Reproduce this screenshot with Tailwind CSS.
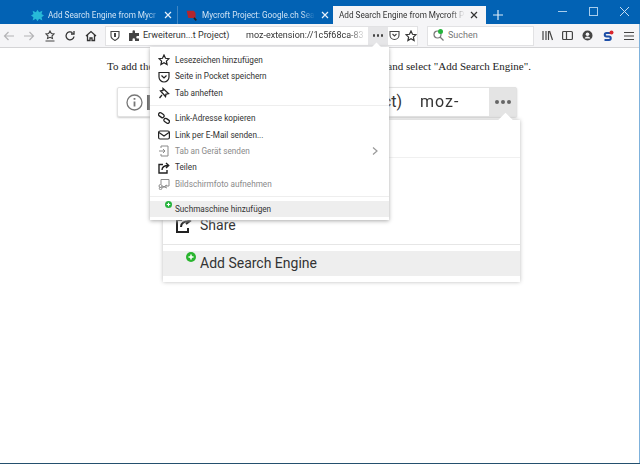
<!DOCTYPE html>
<html lang="en">
<head>
  <meta charset="UTF-8">
  <title>Add Search Engine from Mycroft Project</title>
  <script src="https://cdn.jsdelivr.net/npm/@tailwindcss/browser@4"></script>
</head>
<body class="w-[640px] h-[464px] overflow-hidden bg-white relative font-['Roboto',sans-serif]">

  <!-- tab strip -->
  <div class="h-[24px] bg-[#0262b4] flex items-end text-[8.200px] relative">
    <div class="w-[26px]"></div>
    <div class="w-[152px] h-[18px] flex items-center pl-[5px] text-[#cfe3f5] border-r border-[#3f86c4]">
      <svg class="w-[13px] h-[13px] shrink-0" viewBox="0 0 16 16" fill="#27b9d8"><path d="M8 1l2 3 4-2-1 4 3 2-3 2 1 4-4-2-2 3-2-3-4 2 1-4-3-2 3-2-1-4 4 2z"/></svg>
      <span class="ml-[4px] w-[113px] overflow-hidden whitespace-nowrap [mask-image:linear-gradient(to_right,black_88%,transparent)]">Add Search Engine from Mycr</span>
      <svg class="w-[8px] h-[8px] ml-[3px] shrink-0" viewBox="0 0 8 8" stroke="#e6f0fa" stroke-width="1.2"><path d="M1 1l6 6M7 1l-6 6"/></svg>
    </div>
    <div class="w-[155px] h-[18px] flex items-center pl-[7px] text-[#cfe3f5]">
      <svg class="w-[13px] h-[13px] shrink-0" viewBox="0 0 16 16"><path d="M2 2h9l2 3v6H4z" fill="#b3262e"/><path d="M11 11l3 3" stroke="#222" stroke-width="2"/></svg>
      <span class="ml-[4px] w-[113px] overflow-hidden whitespace-nowrap [mask-image:linear-gradient(to_right,black_88%,transparent)]">Mycroft Project: Google.ch Sea</span>
      <svg class="w-[8px] h-[8px] ml-[6px] shrink-0" viewBox="0 0 8 8" stroke="#e6f0fa" stroke-width="1.2"><path d="M1 1l6 6M7 1l-6 6"/></svg>
    </div>
    <div class="w-[153px] h-[18px] flex items-center pl-[6px] bg-[#f5f5f7] text-[#333]">
      <span class="w-[126px] overflow-hidden whitespace-nowrap [mask-image:linear-gradient(to_right,black_88%,transparent)]">Add Search Engine from Mycroft P</span>
      <svg class="w-[8px] h-[8px] ml-[5px] shrink-0" viewBox="0 0 8 8" stroke="#333" stroke-width="1.2"><path d="M1 1l6 6M7 1l-6 6"/></svg>
    </div>
    <div class="w-[22px] h-[18px] flex items-center justify-center ml-[1px]">
      <svg class="w-[10px] h-[10px]" viewBox="0 0 10 10" stroke="#dcebf8" stroke-width="1.2"><path d="M5 0v10M0 5h10"/></svg>
    </div>
    <div class="ml-auto mr-[11px] self-start h-[22px] flex items-center gap-[22px]">
      <svg class="w-[9px] h-[9px]" viewBox="0 0 9 9" stroke="#a9cdec"><path d="M0 4.500h9"/></svg>
      <svg class="w-[9px] h-[9px]" viewBox="0 0 9 9" stroke="#a9cdec" fill="none"><rect x=".5" y=".5" width="8" height="8"/></svg>
      <svg class="w-[9px] h-[9px]" viewBox="0 0 9 9" stroke="#c5def3"><path d="M0 0l9 9M9 0l-9 9"/></svg>
    </div>
  </div>

  <!-- toolbar -->
  <div class="h-[24px] bg-[#f5f5f7] border-b border-[#d4d4d6] flex items-center text-[9px] text-[#333]">
    <div class="w-[105px] flex items-center">
      <svg class="w-[12px] h-[12px] ml-[3px]" viewBox="0 0 12 12" fill="none" stroke="#b4b4b6" stroke-width="1.2"><path d="M11 6H1.500M5.500 2l-4 4 4 4"/></svg>
      <svg class="w-[12px] h-[12px] ml-[8px]" viewBox="0 0 12 12" fill="none" stroke="#b4b4b6" stroke-width="1.2"><path d="M1 6h9.500M6.500 2l4 4-4 4"/></svg>
      <svg class="w-[12px] h-[12px] ml-[9px]" viewBox="0 0 12 12" fill="none" stroke="#444" stroke-width="1.1"><path d="M6 1l1.400 2.600 2.600.4-2 2 .5 2.500L6 7.300 3.500 8.500 4 6 2 4l2.600-.4zM1.500 11h9"/></svg>
      <svg class="w-[12px] h-[12px] ml-[8px]" viewBox="0 0 12 12" fill="none" stroke="#333" stroke-width="1.3"><path d="M10 6.500A4 4 0 1 1 8.500 2.700M10 1v3H7"/></svg>
      <svg class="w-[12px] h-[12px] ml-[9px]" viewBox="0 0 12 12" fill="none" stroke="#333" stroke-width="1.3"><path d="M1 6l5-4.500L11 6M2.500 5v5.500h2.500V8h2v2.500h2.500V5"/></svg>
    </div>
    <div class="w-[313px] h-[20px] bg-white border border-[#e2e2e4] flex items-center">
      <svg class="w-[10px] h-[11px] ml-[4px]" viewBox="0 0 10 11" fill="none" stroke="#444" stroke-width="1.1"><path d="M1 1.500h8V6c0 2-2 3.500-4 4.500C3 9.500 1 8 1 6z"/><path d="M5 3v4" stroke-width="2"/></svg>
      <svg class="w-[11px] h-[11px] ml-[9px]" viewBox="0 0 11 11" fill="#444"><path d="M0 3h3.500V1.500a1.200 1.200 0 0 1 2.500 0V3h4v3H8.500a1.200 1.200 0 0 0 0 2.500H10V11H6V9.500a1.200 1.200 0 0 0-2.500 0V11H0z"/></svg>
      <span class="ml-[3px] w-[103px] whitespace-nowrap">Erweiterun...t Project)</span>
      <span class="w-[120px] overflow-hidden whitespace-nowrap [mask-image:linear-gradient(to_right,black_85%,transparent)]">moz-extension://1c5f68ca-83</span>
      <div class="w-[20px] h-[18px] ml-[2px] bg-[#e6e6e8] flex items-center justify-center gap-[1.500px]">
        <i class="block w-[2.500px] h-[2.500px] rounded-full bg-[#444]"></i><i class="block w-[2.500px] h-[2.500px] rounded-full bg-[#444]"></i><i class="block w-[2.500px] h-[2.500px] rounded-full bg-[#444]"></i>
      </div>
      <svg class="w-[11px] h-[11px] ml-[1px]" viewBox="0 0 11 11" fill="none" stroke="#444" stroke-width="1.1"><path d="M1 1.500h9V5a4.500 4.500 0 0 1-9 0z"/><path d="M3.500 4l2 2 2-2"/></svg>
      <svg class="w-[12px] h-[12px] ml-[5px]" viewBox="0 0 12 12" fill="none" stroke="#333" stroke-width="1.2"><path d="M6 1l1.500 3.300 3.500.4-2.600 2.400.7 3.500L6 8.800l-3.100 1.800.7-3.500L1 4.700l3.500-.4z"/></svg>
    </div>
    <div class="ml-[9px] w-[107px] h-[20px] bg-white border border-[#e2e2e4] flex items-center text-[#777] relative">
      <svg class="w-[11px] h-[11px] ml-[5px]" viewBox="0 0 11 11" fill="none" stroke="#777" stroke-width="1.2"><circle cx="4.500" cy="4.500" r="3.500"/><path d="M7 7l3.500 3.500"/></svg>
      <i class="absolute left-[10px] top-[2px] w-[5px] h-[5px] rounded-full bg-[#25b33c]"></i>
      <span class="ml-[4px]">Suchen</span>
    </div>
    <div class="ml-[7px] flex items-center">
      <svg class="w-[11px] h-[11px] ml-[1px]" viewBox="0 0 11 11" fill="none" stroke="#444" stroke-width="1.200"><path d="M1 1v9M4 1v9M6.500 1v9M7.500 1l3 9"/></svg>
      <svg class="w-[11px] h-[11px] ml-[9px]" viewBox="0 0 11 11" fill="none" stroke="#444" stroke-width="1.200"><rect x=".6" y="1.500" width="9.800" height="8" rx="1"/><path d="M4.500 1.500v8"/></svg>
      <svg class="w-[11px] h-[11px] ml-[9px]" viewBox="0 0 11 11"><circle cx="5.500" cy="5.500" r="5" fill="#444"/><circle cx="5.500" cy="4.200" r="1.800" fill="#f5f5f7"/><path d="M2.500 8.500a3.200 3.200 0 0 1 6 0z" fill="#f5f5f7"/></svg>
      <svg class="w-[12px] h-[12px] ml-[9px]" viewBox="0 0 12 12"><path d="M9 3H4.500a1.500 1.500 0 0 0 0 3.500h2.500a1.500 1.500 0 0 1 0 3.500H2.500" fill="none" stroke="#1d4fa8" stroke-width="2"/><circle cx="9.500" cy="2.500" r="2" fill="#d9252c"/></svg>
      <svg class="w-[10px] h-[10px] ml-[10px]" viewBox="0 0 10 10" stroke="#444" stroke-width="1.200"><path d="M0 1.500h10M0 5h10M0 8.500h10"/></svg>
    </div>
  </div>

  <!-- page content -->
  <div class="font-['Liberation_Serif',serif] text-[11px] text-[#222] w-[424px] ml-[107px] mt-[11px] flex justify-between leading-[14px]">
    <span>To add the</span>
    <span>and select "Add Search Engine".</span>
  </div>

  <!-- screenshot embedded in the page -->
  <div class="ml-[115px] mt-[14px] w-[405px]">
    <div class="ml-[2px] mr-[3px] h-[30px] bg-white border border-[#e2e2e2] shadow-[0_1px_2px_#ccc] flex items-center rounded-[2px] text-[#333] text-[16px]">
      <svg class="w-[17px] h-[17px] ml-[8px]" viewBox="0 0 17 17" fill="none" stroke="#777" stroke-width="1.300"><circle cx="8.500" cy="8.500" r="7.500"/><path d="M8.500 7.500v5M8.500 4v1.800" stroke-width="1.800"/></svg>
      <div class="w-[5px] h-[15px] ml-[4px] bg-[#666]"></div>
      <span class="ml-auto">ct)</span>
      <span class="ml-[18px] w-[69px] tracking-[1px] whitespace-nowrap [mask-image:linear-gradient(to_right,black_45%,#bbb_60%)]">moz-</span>
      <div class="w-[27px] h-full bg-[#e4e4e4] flex items-center justify-center gap-[2px]">
        <i class="block w-[4px] h-[4px] rounded-full bg-[#666]"></i><i class="block w-[4px] h-[4px] rounded-full bg-[#666]"></i><i class="block w-[4px] h-[4px] rounded-full bg-[#666]"></i>
      </div>
    </div>
    <div class="ml-[48px] mt-[3px] h-[162px] bg-white shadow-[0_0_4px_#bbb] flex flex-col relative">
      <div class="absolute right-[9px] top-[-5px] w-[11px] h-[11px] bg-white rotate-45"></div>
      <div class="h-[38px] border-b border-[#f0f0f0]"></div>
      <div class="mt-auto h-[39px] flex items-center pl-[12px] text-[14px] text-[#333] border-b border-[#e6e6e6]">
        <svg class="w-[17px] h-[17px]" viewBox="0 0 17 17" fill="none" stroke="#222" stroke-width="2"><path d="M7 3H2v12h11v-4M6 10c0-4 3-6 9-6M11 1l4 3-4 3"/></svg>
        <span class="ml-[8px]">Share</span>
      </div>
      <div class="h-[25px] mt-[6px] mb-[6px] bg-[#eeeeee] flex items-center pl-[37px] text-[14px] text-[#333] relative">
        <svg class="absolute left-[23px] top-[1px] w-[10px] h-[10px]" viewBox="0 0 10 10"><circle cx="5" cy="5" r="5" fill="#2ab52f"/><path d="M5 2.500v5M2.500 5h5" stroke="#fff" stroke-width="1.500"/></svg>
        <span>Add Search Engine</span>
      </div>
    </div>
  </div>

  <!-- page actions menu -->
  <div class="absolute left-[150px] top-[47px] w-[239px] h-[173px] bg-white shadow-[0_1px_4px_#aaa] pt-[5px] text-[8.200px] text-[#333]">
    <div class="absolute left-[223px] top-[-3px] w-[7px] h-[7px] bg-white rotate-45"></div>
    <div class="h-[16.400px] flex items-center pl-[8px]">
      <svg class="w-[12px] h-[12px] mr-[5px]" viewBox="0 0 12 12" fill="none" stroke="#222" stroke-width="1.200"><path d="M6 1l1.500 3.300 3.500.4-2.600 2.400.7 3.500L6 8.800l-3.100 1.800.7-3.500L1 4.700l3.500-.4z"/></svg>Lesezeichen hinzufügen
    </div>
    <div class="h-[16.400px] flex items-center pl-[8px]">
      <svg class="w-[12px] h-[12px] mr-[5px]" viewBox="0 0 12 12" fill="none" stroke="#222" stroke-width="1.200"><path d="M1 1.500h10V6A5 5 0 0 1 1 6z"/><path d="M3.500 4.500L6 7l2.500-2.500"/></svg>Seite in Pocket speichern
    </div>
    <div class="h-[16.400px] flex items-center pl-[8px]">
      <svg class="w-[12px] h-[12px] mr-[5px]" viewBox="0 0 12 12" fill="none" stroke="#222" stroke-width="1.300"><path d="M5 1.500l5.500 5-2.500.5-.5 2.500-5-5.500 2.500-.5zM4 8l-2.500 3"/></svg>Tab anheften
    </div>
    <div class="border-t border-[#eeeeee] my-[4px]"></div>
    <div class="h-[16.400px] flex items-center pl-[8px]">
      <svg class="w-[12px] h-[12px] mr-[5px]" viewBox="0 0 12 12" fill="none" stroke="#222" stroke-width="1.300"><rect x=".5" y="1.500" width="6" height="3.500" rx="1.700" transform="rotate(35 3.500 3)"/><rect x="5.500" y="7" width="6" height="3.500" rx="1.700" transform="rotate(35 8.500 9)"/></svg>Link-Adresse kopieren
    </div>
    <div class="h-[16.400px] flex items-center pl-[8px]">
      <svg class="w-[12px] h-[12px] mr-[5px]" viewBox="0 0 12 12" fill="none" stroke="#222" stroke-width="1.200"><rect x=".6" y="2" width="10.800" height="8" rx="1.500"/><path d="M1 3.500l5 3.500 5-3.500"/></svg>Link per E-Mail senden...
    </div>
    <div class="h-[16.400px] flex items-center pl-[8px] text-[#8a8a8a]">
      <svg class="w-[12px] h-[12px] mr-[5px]" viewBox="0 0 12 12" fill="none" stroke="#8a8a8a"><path d="M3 3V1h7v10H3V9M1 6h6M5 4l2 2-2 2"/></svg>Tab an Gerät senden
      <svg class="w-[6px] h-[8px] ml-auto mr-[11px]" viewBox="0 0 6 8" fill="none" stroke="#999" stroke-width="1.200"><path d="M1 .5L5 4 1 7.500"/></svg>
    </div>
    <div class="h-[16.400px] flex items-center pl-[8px]">
      <svg class="w-[12px] h-[12px] mr-[5px]" viewBox="0 0 12 12" fill="none" stroke="#222" stroke-width="1.400"><path d="M5 2.500H1v8.500h8V8M4 8c0-3 2-4.500 6.500-4.500M8 1l2.700 2.500L8 6"/></svg>Teilen
    </div>
    <div class="h-[16.400px] flex items-center pl-[8px] text-[#8a8a8a]">
      <svg class="w-[12px] h-[12px] mr-[5px]" viewBox="0 0 12 12" fill="none" stroke="#8a8a8a"><path d="M3 6V1.500h8V8H7"/><circle cx="2.500" cy="8" r="1.500"/><circle cx="2.500" cy="10.500" r="1.200"/><path d="M4 8l5 2M4 10l5-3"/></svg>Bildschirmfoto aufnehmen
    </div>
    <div class="border-t border-[#eeeeee] mt-[4px] mb-[4px]"></div>
    <div class="h-[16px] flex items-center pl-[25px] bg-[#eeeeee] relative">
      <svg class="absolute left-[15px] top-[0px] w-[7px] h-[7px]" viewBox="0 0 10 10"><circle cx="5" cy="5" r="5" fill="#25b33c"/><path d="M5 2.500v5M2.500 5h5" stroke="#fff" stroke-width="1.500"/></svg>Suchmaschine hinzufügen
    </div>
  </div>

  <div class="absolute right-0 top-[24px] bottom-0 w-[1px] bg-[#7fb2dc]"></div>
  <div class="absolute left-0 right-0 bottom-0 h-[1px] bg-[#24506e]"></div>
</body>
</html>
